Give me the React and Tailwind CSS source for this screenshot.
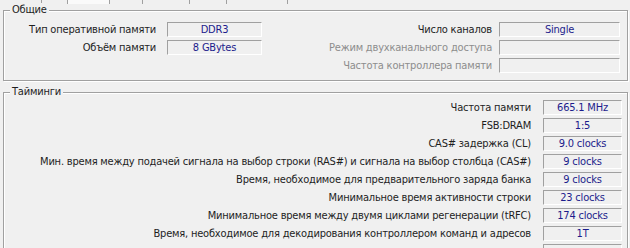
import React from "react";

function Box({ children, className }) {
  return (
    <div
      className={
        "h-[15px] shrink-0 border border-t-[#a0a0a0] border-l-[#a0a0a0] border-r-white border-b-white bg-[#f0f0f0] text-center leading-[13px] text-[#1c1c8c] " +
        className
      }
    >
      {children}
    </div>
  );
}

const timings = [
  ["Частота памяти", "665.1 MHz"],
  ["FSB:DRAM", "1:5"],
  ["CAS# задержка (CL)", "9.0 clocks"],
  ["Мин. время между подачей сигнала на выбор строки (RAS#) и сигнала на выбор столбца (CAS#)", "9 clocks"],
  ["Время, необходимое для предварительного заряда банка", "9 clocks"],
  ["Минимальное время активности строки", "23 clocks"],
  ["Минимальное время между двумя циклами регенерации (tRFC)", "174 clocks"],
  ["Время, необходимое для декодирования контроллером команд и адресов", "1T"],
  ["", ""],
];

export default function App() {
  return (
    <div className="relative h-[248px] w-[630px] overflow-hidden bg-[#f0f0f0] font-['DejaVu_Sans_Condensed','DejaVu_Sans',sans-serif] text-[11px] tracking-[-0.2px] text-[#1e1e1e]">
      {/* tab strip remnants */}
      <div className="flex h-[4px]">
        <div className="w-[42px] border-r border-[#a0a0a0]" />
        <div className="w-[26px] border-r border-[#a0a0a0]" />
        <div className="w-[42px] border-r border-[#a0a0a0] bg-[#fafafa]" />
        <div className="w-[33px] border-r border-[#a0a0a0]" />
        <div className="w-[47px] border-r border-[#a0a0a0]" />
        <div className="w-[37px] border-r border-[#a0a0a0]" />
        <div className="w-[61px] border-r border-[#a0a0a0]" />
      </div>

      {/* Общие */}
      <div className="relative ml-[3px] mt-[6px] h-[71px] w-[625px] border border-[#a0a0a0] shadow-[inset_1px_1px_0_#fff,1px_1px_0_#fff]">
        <div className="absolute left-[6px] top-[-8px] bg-[#f0f0f0] px-[2px] leading-[14px]">Общие</div>
        <div className="flex pt-[11px]">
          <div className="flex flex-col gap-[3px]">
            <div className="flex items-center">
              <div className="w-[152px] text-right leading-[15px]">Тип оперативной памяти</div>
              <Box className="ml-[11px] w-[95px]">DDR3</Box>
            </div>
            <div className="flex items-center">
              <div className="w-[152px] text-right leading-[15px]">Объём памяти</div>
              <Box className="ml-[11px] w-[95px]">8 GBytes</Box>
            </div>
          </div>
          <div className="flex flex-col gap-[3px]">
            <div className="flex items-center">
              <div className="w-[230px] text-right leading-[15px]">Число каналов</div>
              <Box className="ml-[7px] w-[121px]">Single</Box>
            </div>
            <div className="flex items-center">
              <div className="w-[230px] text-right leading-[15px] text-[#8d8d8d]">Режим двухканального доступа</div>
              <Box className="ml-[7px] w-[121px]"></Box>
            </div>
            <div className="flex items-center">
              <div className="w-[230px] text-right leading-[15px] text-[#8d8d8d]">Частота контроллера памяти</div>
              <Box className="ml-[7px] w-[121px]"></Box>
            </div>
          </div>
        </div>
      </div>

      {/* Тайминги */}
      <div className="relative ml-[3px] mt-[11px] h-[200px] w-[625px] border border-[#a0a0a0] shadow-[inset_1px_1px_0_#fff,1px_1px_0_#fff]">
        <div className="absolute left-[6px] top-[-8px] bg-[#f0f0f0] px-[2px] leading-[14px]">Тайминги</div>
        <div className="flex flex-col gap-[3px] pt-[7px]">
          {timings.map(([label, value], i) => (
            <div key={i} className="flex items-center">
              <div className="h-[15px] w-[527px] whitespace-nowrap text-right leading-[15px]">{label}</div>
              <Box className="ml-[12px] w-[79px]">{value}</Box>
            </div>
          ))}
        </div>
      </div>
    </div>
  );
}
